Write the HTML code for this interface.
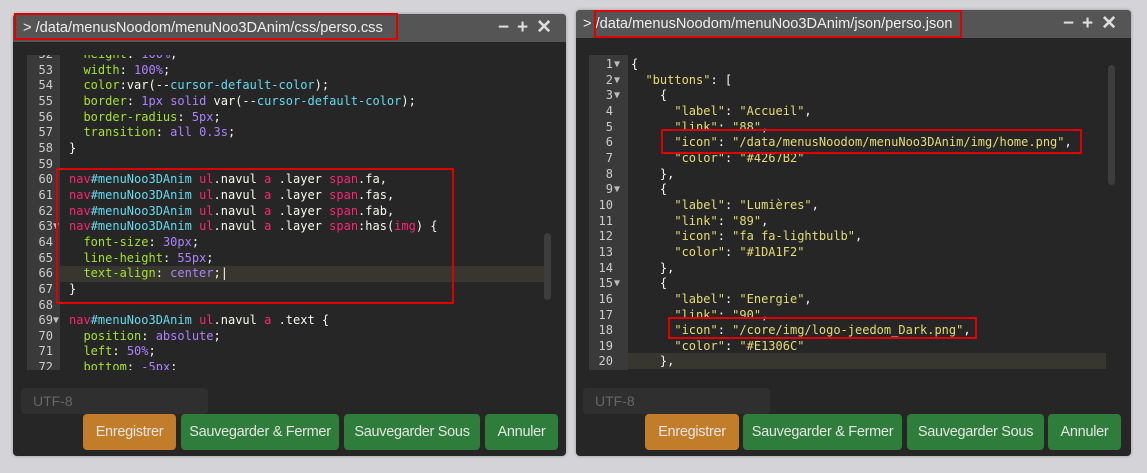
<!DOCTYPE html>
<html><head><style>
body{margin:0;width:1147px;height:473px;background:#d4d4d8;position:relative;overflow:hidden;font-family:"Liberation Sans",sans-serif}
.p{position:absolute;background:#262626;border-radius:4px;box-shadow:0 0 3px rgba(0,0,0,.3)}
.t{position:absolute;left:0;right:0;top:0;height:28px;background:#555;border-radius:4px 4px 0 0;color:#eee;font-size:14.6px;line-height:28px}
.t .nm{position:absolute;left:10px}
.t .ic{position:absolute;right:6px;top:0;font-size:19px;color:#ddd;letter-spacing:8px;font-weight:bold}
.red{position:absolute;border:2px solid #e00000;box-sizing:border-box}
.ed{position:absolute;background:#262626;overflow:hidden}
.g{position:absolute;top:0;bottom:0;background:#3a3a3a}
.ln{position:absolute;font:12px/15.65px "DejaVu Sans Mono",monospace;color:#ddd;white-space:pre}
.num{text-align:right;color:#ccc}
.code{color:#f8f8f2}
.k{color:#f92672}.i{color:#66d9ef}.pr{color:#a6e22e}.v{color:#ae81ff}.s{color:#e6db74}
.act{position:absolute;background:#37372f}
.utf{position:absolute;background:#2f2f2f;border-radius:4px;color:#666;font-size:14px;line-height:26px;padding-left:12px;box-sizing:border-box}
.b{position:absolute;top:414px;height:36px;border-radius:4px;color:#e4e4e4;font-size:14.5px;line-height:36px;text-align:center;background:#2f7d3a;letter-spacing:-0.3px}
.o{background:#c17d2a}
.sb{position:absolute;width:7px;background:#3d3d3d;border-radius:4px}
</style></head><body>

<div class="p" style="left:13px;top:14px;width:553px;height:442px">
 <div class="t"><span class="nm">&gt; /data/menusNoodom/menuNoo3DAnim/css/perso.css</span><span class="ic">−+✕</span></div>
</div>
<div class="red" style="left:14px;top:13px;width:384px;height:27px"></div>
<div class="ed" style="left:27px;top:55px;width:530px;height:315px">
 <div class="g" style="left:0;width:33px"></div>
 <div class="act" style="left:33px;top:211px;width:484px;height:16px"></div>
 <div class="sb" style="left:517px;top:178px;height:67px"></div>
 <div class="ln num" style="left:0;width:26px;top:-8px">52
53
54
55
56
57
58
59
60
61
62
63
64
65
66
67
68
69
70
71
72</div>
 <div class="ln" style="left:26px;top:164px;color:#bbb;font-size:10px;line-height:15.65px">▼





▼</div>
 <div class="ln code" style="left:42px;top:-8px">  <span class="pr">height</span>: <span class="v">100%</span>;
  <span class="pr">width</span>: <span class="v">100%</span>;
  <span class="pr">color</span>:var(--<span class="i">cursor-default-color</span>);
  <span class="pr">border</span>: <span class="v">1px</span> <span class="v">solid</span> var(--<span class="i">cursor-default-color</span>);
  <span class="pr">border-radius</span>: <span class="v">5px</span>;
  <span class="pr">transition</span>: <span class="v">all</span> <span class="v">0.3s</span>;
}

<span class="k">nav</span><span class="i">#menuNoo3DAnim</span> <span class="k">ul</span>.navul <span class="k">a</span> .layer <span class="k">span</span>.fa,
<span class="k">nav</span><span class="i">#menuNoo3DAnim</span> <span class="k">ul</span>.navul <span class="k">a</span> .layer <span class="k">span</span>.fas,
<span class="k">nav</span><span class="i">#menuNoo3DAnim</span> <span class="k">ul</span>.navul <span class="k">a</span> .layer <span class="k">span</span>.fab,
<span class="k">nav</span><span class="i">#menuNoo3DAnim</span> <span class="k">ul</span>.navul <span class="k">a</span> .layer <span class="k">span</span>:has(<span class="k">img</span>) {
  <span class="pr">font-size</span>: <span class="v">30px</span>;
  <span class="pr">line-height</span>: <span class="v">55px</span>;
  <span class="pr">text-align</span>: <span class="v">center</span>;|
}

<span class="k">nav</span><span class="i">#menuNoo3DAnim</span> <span class="k">ul</span>.navul <span class="k">a</span> .text {
  <span class="pr">position</span>: <span class="v">absolute</span>;
  <span class="pr">left</span>: <span class="v">50%</span>;
  <span class="pr">bottom</span>: <span class="v">-5px</span>;</div>
</div>
<div class="red" style="left:56px;top:168px;width:398px;height:136px"></div>
<div class="utf" style="left:21px;top:388px;width:187px">UTF-8</div>
<div class="b o" style="left:83px;width:93px">Enregistrer</div>
<div class="b" style="left:181px;width:158px">Sauvegarder &amp; Fermer</div>
<div class="b" style="left:344px;width:136px">Sauvegarder Sous</div>
<div class="b" style="left:485px;width:73px">Annuler</div>

<div class="p" style="left:576px;top:10px;width:555px;height:446px">
 <div class="t"><span class="nm" style="left:7px">&gt; /data/menusNoodom/menuNoo3DAnim/json/perso.json</span><span class="ic">−+✕</span></div>
</div>
<div class="red" style="left:594px;top:10px;width:368px;height:28px"></div>
<div class="ed" style="left:589px;top:55px;width:534px;height:315px">
 <div class="g" style="left:0;width:39px"></div>
 <div class="act" style="left:39px;top:298px;width:478px;height:16px"></div>
 <div class="sb" style="left:519px;top:10px;height:120px"></div>
 <div class="ln num" style="left:0;width:24px;top:2px">1
2
3
4
5
6
7
8
9
10
11
12
13
14
15
16
17
18
19
20</div>
 <div class="ln" style="left:25px;top:2px;color:#bbb;font-size:10px">▼
▼
▼





▼





▼</div>
 <div class="ln code" style="left:42px;top:2px">{
  <span class="s">"buttons"</span>: [
    {
      <span class="s">"label"</span>: <span class="s">"Accueil"</span>,
      <span class="s">"link"</span>: <span class="s">"88"</span>,
      <span class="s">"icon"</span>: <span class="s">"/data/menusNoodom/menuNoo3DAnim/img/home.png"</span>,
      <span class="s">"color"</span>: <span class="s">"#4267B2"</span>
    },
    {
      <span class="s">"label"</span>: <span class="s">"Lumières"</span>,
      <span class="s">"link"</span>: <span class="s">"89"</span>,
      <span class="s">"icon"</span>: <span class="s">"fa fa-lightbulb"</span>,
      <span class="s">"color"</span>: <span class="s">"#1DA1F2"</span>
    },
    {
      <span class="s">"label"</span>: <span class="s">"Energie"</span>,
      <span class="s">"link"</span>: <span class="s">"90"</span>,
      <span class="s">"icon"</span>: <span class="s">"/core/img/logo-jeedom_Dark.png"</span>,
      <span class="s">"color"</span>: <span class="s">"#E1306C"</span>
    },</div>
</div>
<div class="red" style="left:661px;top:129px;width:421px;height:25px"></div>
<div class="red" style="left:668px;top:317px;width:309px;height:22px"></div>
<div class="utf" style="left:583px;top:388px;width:187px">UTF-8</div>
<div class="b o" style="left:645px;width:94px">Enregistrer</div>
<div class="b" style="left:743px;width:159px">Sauvegarder &amp; Fermer</div>
<div class="b" style="left:907px;width:137px">Sauvegarder Sous</div>
<div class="b" style="left:1048px;width:73px">Annuler</div>
</body></html>
